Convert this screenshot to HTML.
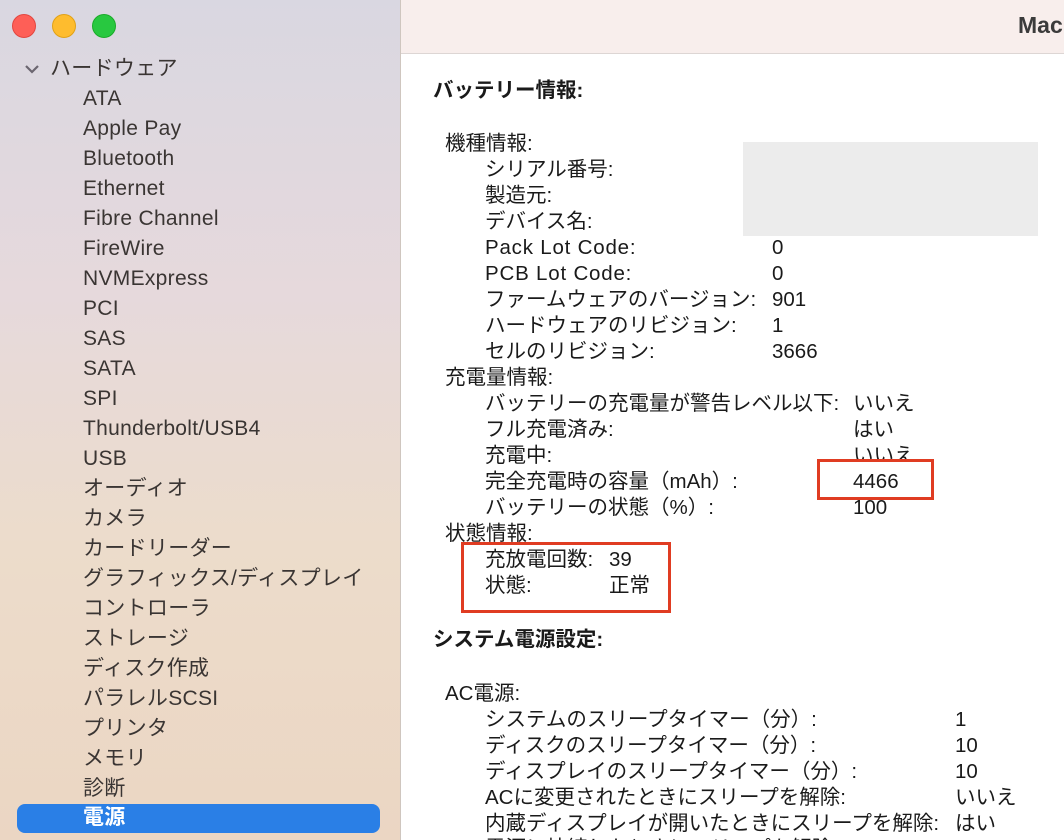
<!DOCTYPE html>
<html><head><meta charset="utf-8"><style>
*{margin:0;padding:0;box-sizing:border-box}
html,body{width:1064px;height:840px;overflow:hidden}
body{position:relative;background:#fff;font-family:"Liberation Sans","Noto Sans CJK JP",sans-serif;color:#1d1d1d}
#side{position:absolute;left:0;top:0;width:401px;height:840px;background:linear-gradient(180deg,#d9d7e1 0%,#e6d9dc 35%,#ecdccb 65%,#ebd6c3 100%);border-right:1px solid #cfc6bf}
#bar{position:absolute;left:401px;top:0;width:663px;height:54px;background:#f8eeec;border-bottom:1px solid #ddd6d4;overflow:hidden}
.d{position:absolute;width:24px;height:24px;border-radius:50%;top:14px}
.t{position:absolute;white-space:nowrap;line-height:26px;height:26px}
.s{font-size:21px;color:#3a3533;left:83px;letter-spacing:0.3px}
.c{font-size:20.5px;color:#1a1a1a;margin-top:2px}
.b{font-weight:bold}
.box{position:absolute;border:3px solid #e03c22}
</style></head><body>
<div id="side">
<div class="d" style="left:12px;background:#fe5f57;border:1px solid #e2463f"></div>
<div class="d" style="left:52px;background:#febc2e;border:1px solid #e1a116"></div>
<div class="d" style="left:92px;background:#28c840;border:1px solid #1aab29"></div>
<svg style="position:absolute;left:24px;top:63px" width="16" height="12"><path d="M2 3 L8 9 L14 3" stroke="#6b6670" stroke-width="2.2" fill="none"/></svg>
<div class="t s" style="left:50px;top:56px">ハードウェア</div>
<div class="t s" style="top:86px">ATA</div>
<div class="t s" style="top:116px">Apple Pay</div>
<div class="t s" style="top:146px">Bluetooth</div>
<div class="t s" style="top:176px">Ethernet</div>
<div class="t s" style="top:206px">Fibre Channel</div>
<div class="t s" style="top:236px">FireWire</div>
<div class="t s" style="top:266px">NVMExpress</div>
<div class="t s" style="top:296px">PCI</div>
<div class="t s" style="top:326px">SAS</div>
<div class="t s" style="top:356px">SATA</div>
<div class="t s" style="top:386px">SPI</div>
<div class="t s" style="top:416px">Thunderbolt/USB4</div>
<div class="t s" style="top:446px">USB</div>
<div class="t s" style="top:476px">オーディオ</div>
<div class="t s" style="top:506px">カメラ</div>
<div class="t s" style="top:536px">カードリーダー</div>
<div class="t s" style="top:566px">グラフィックス/ディスプレイ</div>
<div class="t s" style="top:596px">コントローラ</div>
<div class="t s" style="top:626px">ストレージ</div>
<div class="t s" style="top:656px">ディスク作成</div>
<div class="t s" style="top:686px">パラレルSCSI</div>
<div class="t s" style="top:716px">プリンタ</div>
<div class="t s" style="top:746px">メモリ</div>
<div class="t s" style="top:776px">診断</div>
<div style="position:absolute;left:17px;top:804px;width:363px;height:29px;background:#2a7fe6;border-radius:8px"></div>
<div class="t s b" style="top:805px;color:#fff">電源</div>
</div>
<div id="bar"><div class="t b" style="left:617px;top:12px;font-size:23px;color:#3b3b3b">Mac</div></div>
<div style="position:absolute;left:743px;top:142px;width:295px;height:94px;background:#ececec"></div>
<div class="t c b" style="left:433px;top:76px">バッテリー情報:</div>
<div class="t c" style="left:445px;top:129px">機種情報:</div>
<div class="t c" style="left:485px;top:155px">シリアル番号:</div>
<div class="t c" style="left:485px;top:181px">製造元:</div>
<div class="t c" style="left:485px;top:207px">デバイス名:</div>
<div class="t c" style="left:485px;top:233px;letter-spacing:0.8px">Pack Lot Code:</div><div class="t c" style="left:772px;top:233px">0</div>
<div class="t c" style="left:485px;top:259px;letter-spacing:0.8px">PCB Lot Code:</div><div class="t c" style="left:772px;top:259px">0</div>
<div class="t c" style="left:485px;top:285px">ファームウェアのバージョン:</div><div class="t c" style="left:772px;top:285px">901</div>
<div class="t c" style="left:485px;top:311px">ハードウェアのリビジョン:</div><div class="t c" style="left:772px;top:311px">1</div>
<div class="t c" style="left:485px;top:337px">セルのリビジョン:</div><div class="t c" style="left:772px;top:337px">3666</div>
<div class="t c" style="left:445px;top:363px">充電量情報:</div>
<div class="t c" style="left:485px;top:389px">バッテリーの充電量が警告レベル以下:</div><div class="t c" style="left:853px;top:389px">いいえ</div>
<div class="t c" style="left:485px;top:415px">フル充電済み:</div><div class="t c" style="left:853px;top:415px">はい</div>
<div class="t c" style="left:485px;top:441px">充電中:</div><div class="t c" style="left:853px;top:441px">いいえ</div>
<div class="t c" style="left:485px;top:467px">完全充電時の容量（mAh）:</div>
<div class="t c" style="left:485px;top:493px">バッテリーの状態（%）:</div><div class="t c" style="left:853px;top:493px">100</div>
<div class="t c" style="left:445px;top:519px">状態情報:</div>
<div class="t c" style="left:485px;top:545px">充放電回数:</div><div class="t c" style="left:609px;top:545px">39</div>
<div class="t c" style="left:485px;top:571px">状態:</div><div class="t c" style="left:609px;top:571px">正常</div>
<div class="box" style="left:817px;top:459px;width:117px;height:41px;background:#fff"></div>
<div class="t c" style="left:853px;top:467px">4466</div>
<div class="box" style="left:461px;top:542px;width:210px;height:71px"></div>
<div class="t c b" style="left:433px;top:625px">システム電源設定:</div>
<div class="t c" style="left:445px;top:679px">AC電源:</div>
<div class="t c" style="left:485px;top:705px">システムのスリープタイマー（分）:</div><div class="t c" style="left:955px;top:705px">1</div>
<div class="t c" style="left:485px;top:731px">ディスクのスリープタイマー（分）:</div><div class="t c" style="left:955px;top:731px">10</div>
<div class="t c" style="left:485px;top:757px">ディスプレイのスリープタイマー（分）:</div><div class="t c" style="left:955px;top:757px">10</div>
<div class="t c" style="left:485px;top:783px">ACに変更されたときにスリープを解除:</div><div class="t c" style="left:955px;top:783px">いいえ</div>
<div class="t c" style="left:485px;top:809px">内蔵ディスプレイが開いたときにスリープを解除:</div><div class="t c" style="left:955px;top:809px">はい</div>
<div class="t c" style="left:485px;top:834px">電源に接続したときにスリープを解除:</div>
</body></html>
